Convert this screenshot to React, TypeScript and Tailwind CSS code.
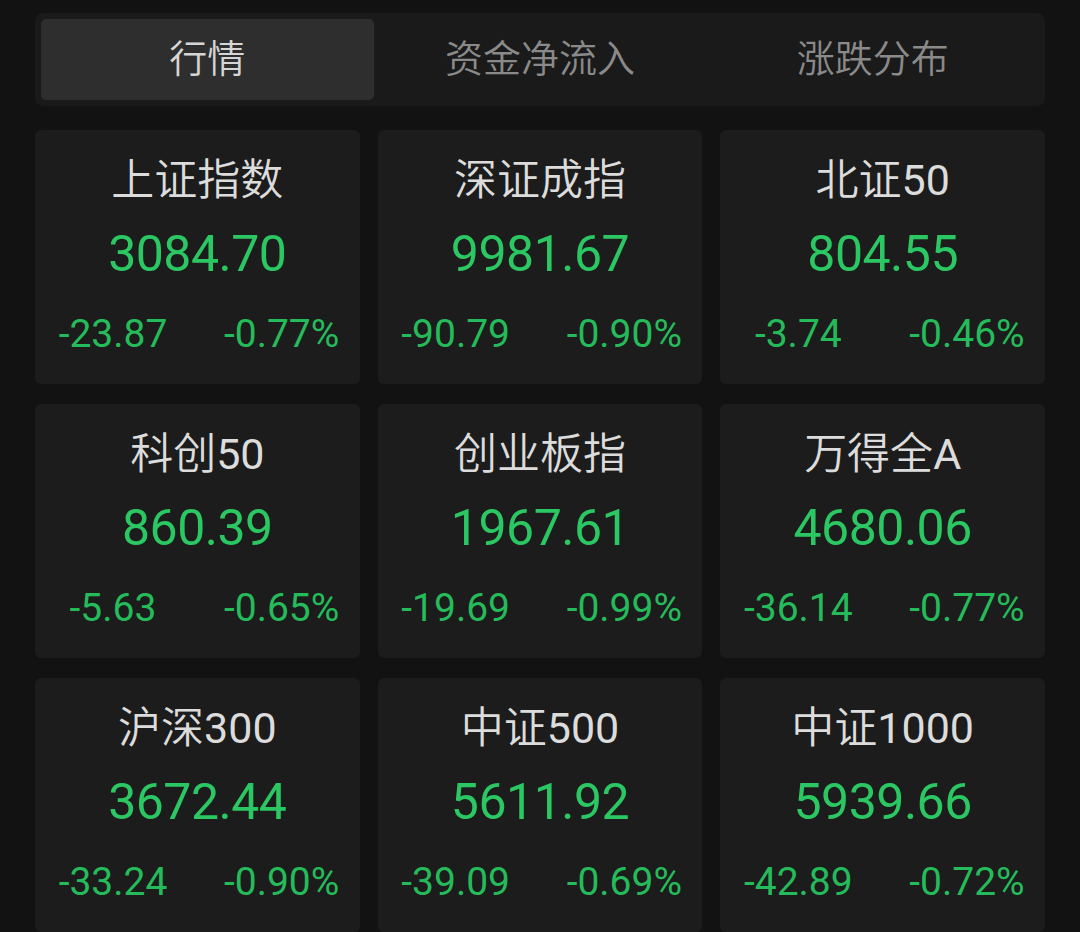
import React, { useState } from 'react';

interface IndexItem {
  name: string;
  value: string;
  change: string;
  percent: string;
}

const tabs = ['行情', '资金净流入', '涨跌分布'];

const indices: IndexItem[] = [
  { name: '上证指数', value: '3084.70', change: '-23.87', percent: '-0.77%' },
  { name: '深证成指', value: '9981.67', change: '-90.79', percent: '-0.90%' },
  { name: '北证50', value: '804.55', change: '-3.74', percent: '-0.46%' },
  { name: '科创50', value: '860.39', change: '-5.63', percent: '-0.65%' },
  { name: '创业板指', value: '1967.61', change: '-19.69', percent: '-0.99%' },
  { name: '万得全A', value: '4680.06', change: '-36.14', percent: '-0.77%' },
  { name: '沪深300', value: '3672.44', change: '-33.24', percent: '-0.90%' },
  { name: '中证500', value: '5611.92', change: '-39.09', percent: '-0.69%' },
  { name: '中证1000', value: '5939.66', change: '-42.89', percent: '-0.72%' },
];

// latin runs (digits, "A") keep regular weight, CJK uses the lighter cut
const Title: React.FC<{ text: string }> = ({ text }) => (
  <div className="text-[43px] leading-[48px] font-[350] text-[#dcdcdc]">
    {text.split(/([0-9A-Za-z]+)/).map((part, i) =>
      /^[0-9A-Za-z]+$/.test(part) ? (
        <span key={i} className="font-normal">{part}</span>
      ) : (
        <span key={i}>{part}</span>
      )
    )}
  </div>
);

const IndexCard: React.FC<{ item: IndexItem }> = ({ item }) => (
  <div className="h-[254px] bg-[#1c1c1c] rounded-[6px] flex flex-col items-center pt-[26px]">
    <Title text={item.name} />
    <div className="mt-[22px] text-[50px] leading-[56px] tracking-[-0.5px] text-[#2bc763]">{item.value}</div>
    <div className="mt-[30px] w-full flex justify-between px-[10px] text-[39px] leading-[44px] text-[#25bb5a]">
      <span className="w-[136px] text-center">{item.change}</span>
      <span className="w-[136px] text-center">{item.percent}</span>
    </div>
  </div>
);

export default function App() {
  const [active, setActive] = useState(0);

  return (
    <div
      className="w-[1080px] h-[932px] overflow-hidden bg-[#121212] px-[35px] pt-[13px]"
      style={{ fontFamily: 'Roboto, "Noto Sans CJK SC", sans-serif' }}
    >
      {/* Tabs */}
      <div className="bg-[#1a1a1a] rounded-[8px] p-[6px] flex">
        {tabs.map((t, i) => (
          <button
            key={t}
            onClick={() => setActive(i)}
            className={
              i === active
                ? 'flex-1 h-[81px] rounded-[5px] bg-[#2e2e2e] text-[38px] font-[350] text-[#d6d6d6]'
                : 'flex-1 h-[81px] rounded-[5px] text-[38px] font-[350] text-[#8a8a8a]'
            }
          >
            {t}
          </button>
        ))}
      </div>

      {/* Index grid */}
      <div className="mt-[24px] grid grid-cols-3 gap-x-[18px] gap-y-[20px]">
        {indices.map((item) => (
          <IndexCard key={item.name} item={item} />
        ))}
      </div>
    </div>
  );
}
